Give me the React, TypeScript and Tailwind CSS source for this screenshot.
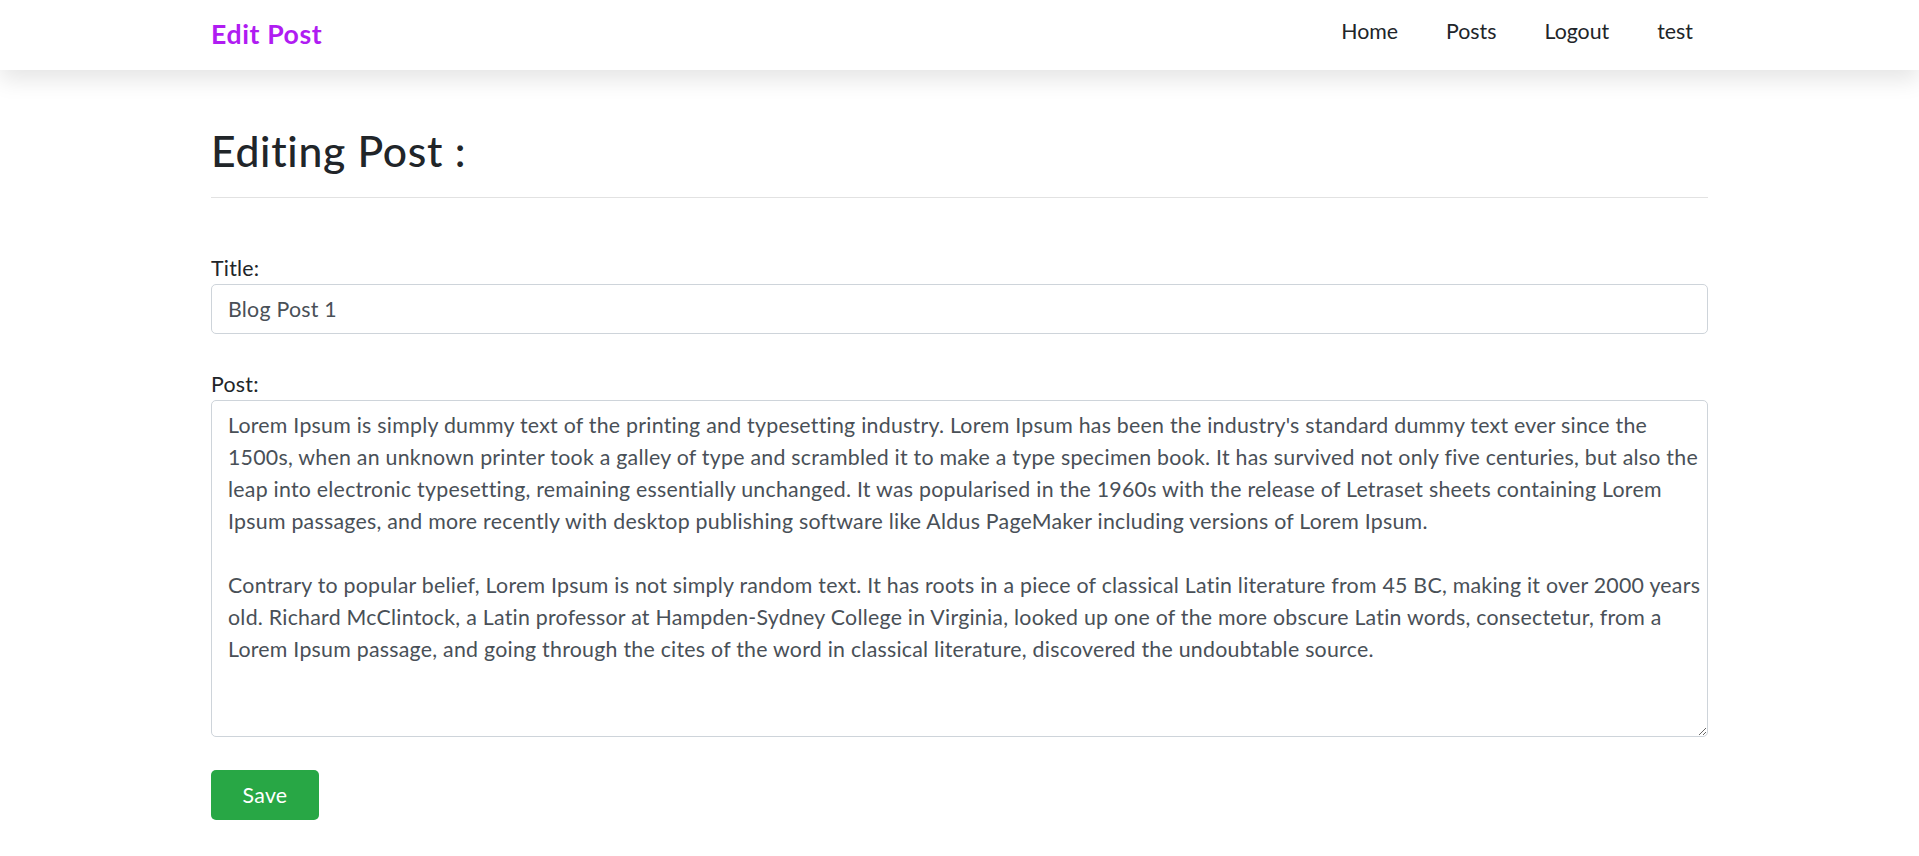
import { useState } from 'react'

const POST_BODY =
  "Lorem Ipsum is simply dummy text of the printing and typesetting industry. Lorem Ipsum has been the industry's standard dummy text ever since the 1500s, when an unknown printer took a galley of type and scrambled it to make a type specimen book. It has survived not only five centuries, but also the leap into electronic typesetting, remaining essentially unchanged. It was popularised in the 1960s with the release of Letraset sheets containing Lorem Ipsum passages, and more recently with desktop publishing software like Aldus PageMaker including versions of Lorem Ipsum.\n\nContrary to popular belief, Lorem Ipsum is not simply random text. It has roots in a piece of classical Latin literature from 45 BC, making it over 2000 years old. Richard McClintock, a Latin professor at Hampden-Sydney College in Virginia, looked up one of the more obscure Latin words, consectetur, from a Lorem Ipsum passage, and going through the cites of the word in classical literature, discovered the undoubtable source."

export default function App() {
  const [title, setTitle] = useState('Blog Post 1')
  const [body, setBody] = useState(POST_BODY)

  return (
    <div className="min-h-screen bg-white text-[#212529] font-['Lato','Open_Sans',sans-serif] text-[21.33px] leading-[32px] tracking-[0.25px]">
      {/* Navbar */}
      <nav className="h-[70px] bg-white shadow-[0_10px_21px_rgba(0,0,0,0.1)]">
        <div className="w-[1497px] h-full mx-auto flex items-center justify-between">
          <a href="#" className="text-[26.67px] font-bold tracking-[0.6px] text-[#b01cf2] no-underline -mt-[2px]">
            Edit Post
          </a>
          <ul className="flex items-center gap-[48px] pr-[15px] list-none m-0 p-0 -mt-[8px] tracking-normal">
            {['Home', 'Posts', 'Logout', 'test'].map((label) => (
              <li key={label}>
                <a href="#" className="text-[#212529] no-underline">
                  {label}
                </a>
              </li>
            ))}
          </ul>
        </div>
      </nav>

      <main className="w-[1497px] mx-auto pt-[55px] pb-10">
        <h2 className="text-[42.67px] leading-[1.2] font-medium tracking-[0.7px]">Editing Post :</h2>
        <hr className="mt-[21px] border-0 border-t border-[#e2e2e2]" />

        <form className="pt-[54px]" onSubmit={(e) => e.preventDefault()}>
          <label htmlFor="title" className="block">Title:</label>
          <input
            id="title"
            value={title}
            onChange={(e) => setTitle(e.target.value)}
            className="block w-full h-[50px] px-4 border border-[#ced4da] rounded-[5px] text-[#495057] outline-none"
          />

          <label htmlFor="post" className="block mt-[34px]">Post:</label>
          <textarea
            id="post"
            value={body}
            onChange={(e) => setBody(e.target.value)}
            className="block w-full h-[337px] pl-4 pr-[4px] py-[7.5px] border border-[#ced4da] rounded-[5px] text-[#495057] outline-none resize-y"
          />

          <button
            type="submit"
            className="mt-[33px] w-[108px] h-[50px] rounded-[5px] bg-[#28a745] text-white"
          >
            Save
          </button>
        </form>
      </main>
    </div>
  )
}
